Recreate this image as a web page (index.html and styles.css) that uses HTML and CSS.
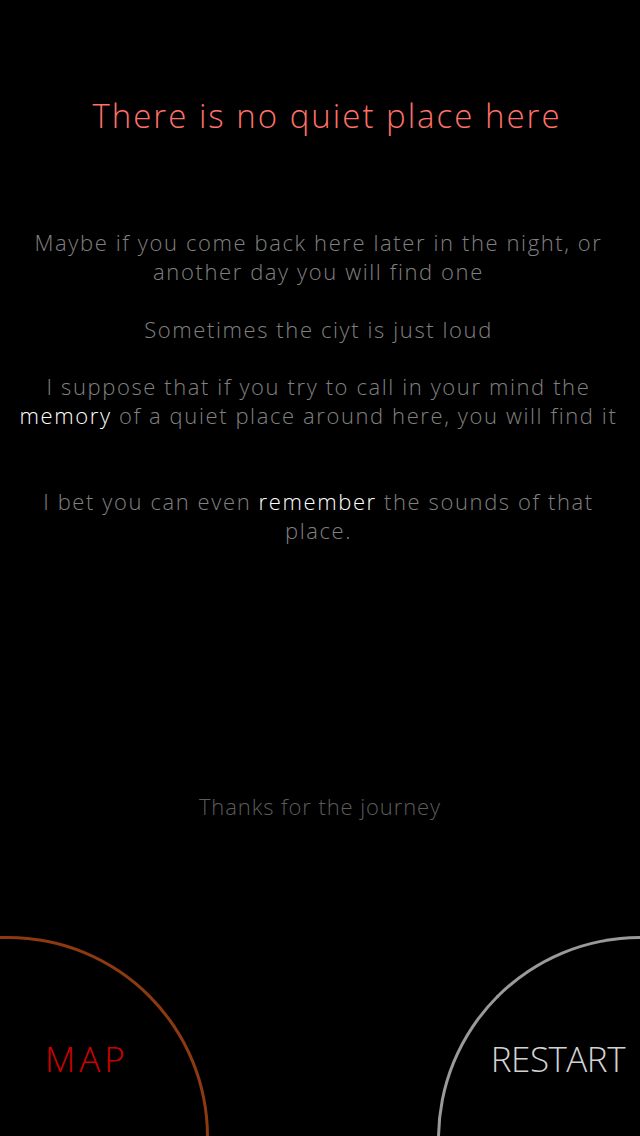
FILE: index.html
```html
<!DOCTYPE html>
<html>
<head>
<meta charset="utf-8">
<link rel="stylesheet" href="styles.css">
</head>
<body>
<div class="screen">
  <h1 class="title">There is no quiet place here</h1>
  <div class="story">
    <p class="line">Maybe if you come back here later in the night, or<br>another day you will find one</p>
    <p class="line">Sometimes the ciyt is just loud</p>
    <p class="line">I suppose that if you try to call in your mind the<br><span class="hl">memory</span> of a quiet place around here, you will find it</p>
    <p class="line gap">I bet you can even <span class="hl">remember</span> the sounds of that<br>place.</p>
  </div>
  <p class="thanks">Thanks for the journey</p>
  <div class="footer">
    <div class="corner corner-map"><span class="label">MAP</span></div>
    <div class="corner corner-restart"><span class="label">RESTART</span></div>
  </div>
</div>
</body>
</html>
```
FILE: styles.css
```css
html, body {
  margin: 0;
  padding: 0;
  background: #000;
}
.screen {
  width: 640px;
  height: 1136px;
  display: flex;
  flex-direction: column;
  overflow: hidden;
  font-family: "Open Sans", "DejaVu Sans", sans-serif;
  font-weight: 300;
}
.title {
  margin: 94px 0 0 0;
  height: 44px;
  line-height: 44px;
  font-size: 33px;
  font-weight: 300;
  letter-spacing: 2px;
  color: #ff7068;
  text-align: center;
  padding-left: 14px;
}
.story {
  margin-top: 90px;
  display: flex;
  flex-direction: column;
  gap: 29px;
  text-align: center;
  padding-right: 3px;
}
.line {
  margin: 0;
  font-size: 22px;
  line-height: 28.8px;
  letter-spacing: 1.6px;
  color: #808080;
}
.line.gap {
  margin-top: 28px;
}
.hl {
  color: #fff;
}
.thanks {
  margin: 247px 0 0 0;
  font-size: 22px;
  line-height: 29px;
  letter-spacing: 0.9px;
  color: #5c5c5c;
  text-align: center;
}
.footer {
  margin-top: auto;
  height: 200px;
  display: flex;
  justify-content: space-between;
  overflow: hidden;
}
.corner {
  height: 212px;
  box-sizing: border-box;
  display: flex;
  flex-shrink: 0;
}
.corner-map {
  width: 209px;
  border-top: 3px solid #8c3a10;
  border-right: 3px solid #8c3a10;
  border-top-right-radius: 201px;
  padding: 107px 0 0 45px;
}
.corner-restart {
  width: 203px;
  border-top: 3px solid #9a9a9a;
  border-left: 3px solid #9a9a9a;
  border-top-left-radius: 203px;
  padding: 107px 15px 0 0;
  justify-content: flex-end;
}
.label {
  font-size: 35px;
  line-height: 26px;
  height: 26px;
  white-space: nowrap;
}
.corner-map .label {
  color: #d00000;
  letter-spacing: 4px;
}
.corner-restart .label {
  color: #d2d2d2;
  letter-spacing: -0.5px;
}
```
